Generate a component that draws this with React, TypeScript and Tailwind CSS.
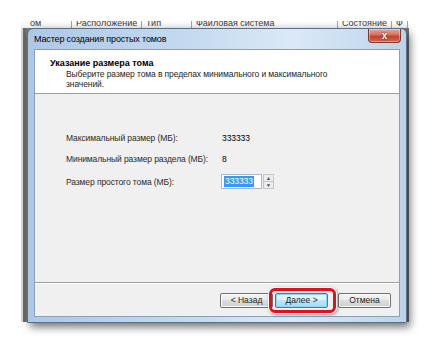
const headers = [
  { label: "ом", w: "w-[46px]" },
  { label: "Расположение", w: "w-[70px]" },
  { label: "Тип", w: "w-[50px]" },
  { label: "Файловая система", w: "w-[146px]" },
  { label: "Состояние", w: "w-[54px]" },
  { label: "Ф", w: "w-[16px]" },
];

const rows = [
  { label: "Максимальный размер (МБ):", value: "333333" },
  { label: "Минимальный размер раздела (МБ):", value: "8" },
];

const WinButton = ({ text, primary }: { text: string; primary?: boolean }) => (
  <button
    className={`h-[15px] w-[53px] rounded-[2px] border text-[8.5px] leading-none text-[#1e1e1e] ${
      primary
        ? "border-[#3c7fb1] bg-[linear-gradient(#eaf6fd,#d9f0fc_50%,#bee6fd_50%,#a7d9f5)] shadow-[inset_0_0_0_1px_#8fd3f5]"
        : "border-[#707070] bg-[linear-gradient(#f2f2f2,#ebebeb_50%,#dddddd_50%,#cfcfcf)] shadow-[inset_0_0_0_1px_#fcfcfc]"
    }`}
  >
    {text}
  </button>
);

export default function App() {
  return (
    <div className="relative h-[350px] w-[434px] overflow-hidden bg-white font-['Liberation_Sans',Arial,sans-serif]">
      {/* disk management window behind */}
      <div className="absolute left-[21px] top-[21px] h-[301px] w-[388px] bg-[#7a7a7a]">
        <div className="flex h-[7px] items-end overflow-hidden bg-[linear-gradient(#ffffff,#eef0f2)] pl-[5px] text-[9px] leading-[10px] text-[#3a3a3a]">
          {headers.map((h) => (
            <div key={h.label} className={`${h.w} shrink-0 overflow-hidden whitespace-nowrap border-r border-[#9aa4b0] pl-[4px]`}>
              {h.label}
            </div>
          ))}
        </div>
        <div className="flex h-[294px] w-[6px]">
          <div className="w-[2px] bg-[#d6d6d6]" />
          <div className="w-[3px] bg-[#6b6b6b]" />
        </div>
      </div>

      {/* dialog */}
      <div className="absolute left-[27px] top-[28px] flex h-[295px] w-[380px] flex-col rounded-t-[6px] border border-[#5a6f86] bg-[linear-gradient(90deg,#adc8e6,#c6dbf0_45%,#dbe9f7_70%,#bcd3ec)] shadow-[3px_4px_9px_rgba(0,0,0,0.55)]">
        <div className="flex h-[20px] shrink-0 items-start justify-between pl-[6px] pr-[5px]">
          <span className="pt-[4px] text-[9px] leading-[12px] tracking-[-0.15px] text-black">Мастер создания простых томов</span>
          <div className="flex h-[14px] w-[33px] items-center justify-center rounded-b-[4px] border border-t-0 border-[#7a3a33] bg-[linear-gradient(#e8a799,#d4705f_45%,#c3432c_55%,#d0654b)] shadow-[inset_0_0_0_1px_rgba(255,255,255,0.35)]">
            <span className="text-[10px] font-bold leading-none text-white [text-shadow:0_0_2px_#3a1008]">x</span>
          </div>
        </div>

        <div className="mx-[6px] mb-[5px] flex flex-1 flex-col border border-[#8aa0b8] bg-[#f0f0f0]">
          {/* header */}
          <div className="h-[44px] shrink-0 border-b border-[#a0a0a0] bg-white pl-[15px] pt-[7px]">
            <div className="text-[9px] font-bold leading-[12px] text-black">Указание размера тома</div>
            <div className="pl-[16px] text-[8.5px] leading-[10px] tracking-[-0.1px] text-[#1e1e1e]">
              Выберите размер тома в пределах минимального и максимального
              <br />
              значений.
            </div>
          </div>

          {/* body */}
          <div className="flex flex-1 flex-col gap-[9px] pl-[31px] pt-[38px] text-[8.5px] leading-[12px] tracking-[-0.1px] text-[#2a2a2a]">
            {rows.map((r) => (
              <div key={r.label} className="flex h-[12px] items-center whitespace-nowrap">
                <span className="w-[156px]">{r.label}</span>
                <span className="text-black">{r.value}</span>
              </div>
            ))}
            <div className="flex items-center whitespace-nowrap">
              <span className="w-[155px]">Размер простого тома (МБ):</span>
              <div className="flex h-[15px] w-[41px] items-center border border-[#abb8c8] bg-white pl-[2px]">
                <span className="bg-[#3399ff] px-[1px] leading-[11px] text-white">333333</span>
              </div>
              <div className="ml-[1px] flex h-[15px] w-[11px] flex-col border border-[#c5c5c5] bg-[#ececec]">
                <div className="flex flex-1 items-center justify-center border-b border-[#c5c5c5] text-[5px] leading-none text-[#444]">▲</div>
                <div className="flex flex-1 items-center justify-center text-[5px] leading-none text-[#444]">▼</div>
              </div>
            </div>
          </div>

          {/* buttons */}
          <div className="flex h-[34px] shrink-0 items-start justify-end border-t border-[#a0a0a0] pr-[8px] pt-[10px] shadow-[inset_0_1px_0_#ffffff]">
            <div className="relative flex gap-[2px]">
              <WinButton text="< Назад" />
              <WinButton text="Далее >" primary />
              <div className="pointer-events-none absolute left-[49px] top-[-5px] h-[25px] w-[67px] rounded-[6px] border-[3px] border-[#e3101e] shadow-[0_0_0_1px_#ffffff,1px_1px_3px_1px_rgba(0,0,0,0.35)]" />
            </div>
            <div className="ml-[10px] flex">
              <WinButton text="Отмена" />
            </div>
          </div>
        </div>
      </div>
    </div>
  );
}
